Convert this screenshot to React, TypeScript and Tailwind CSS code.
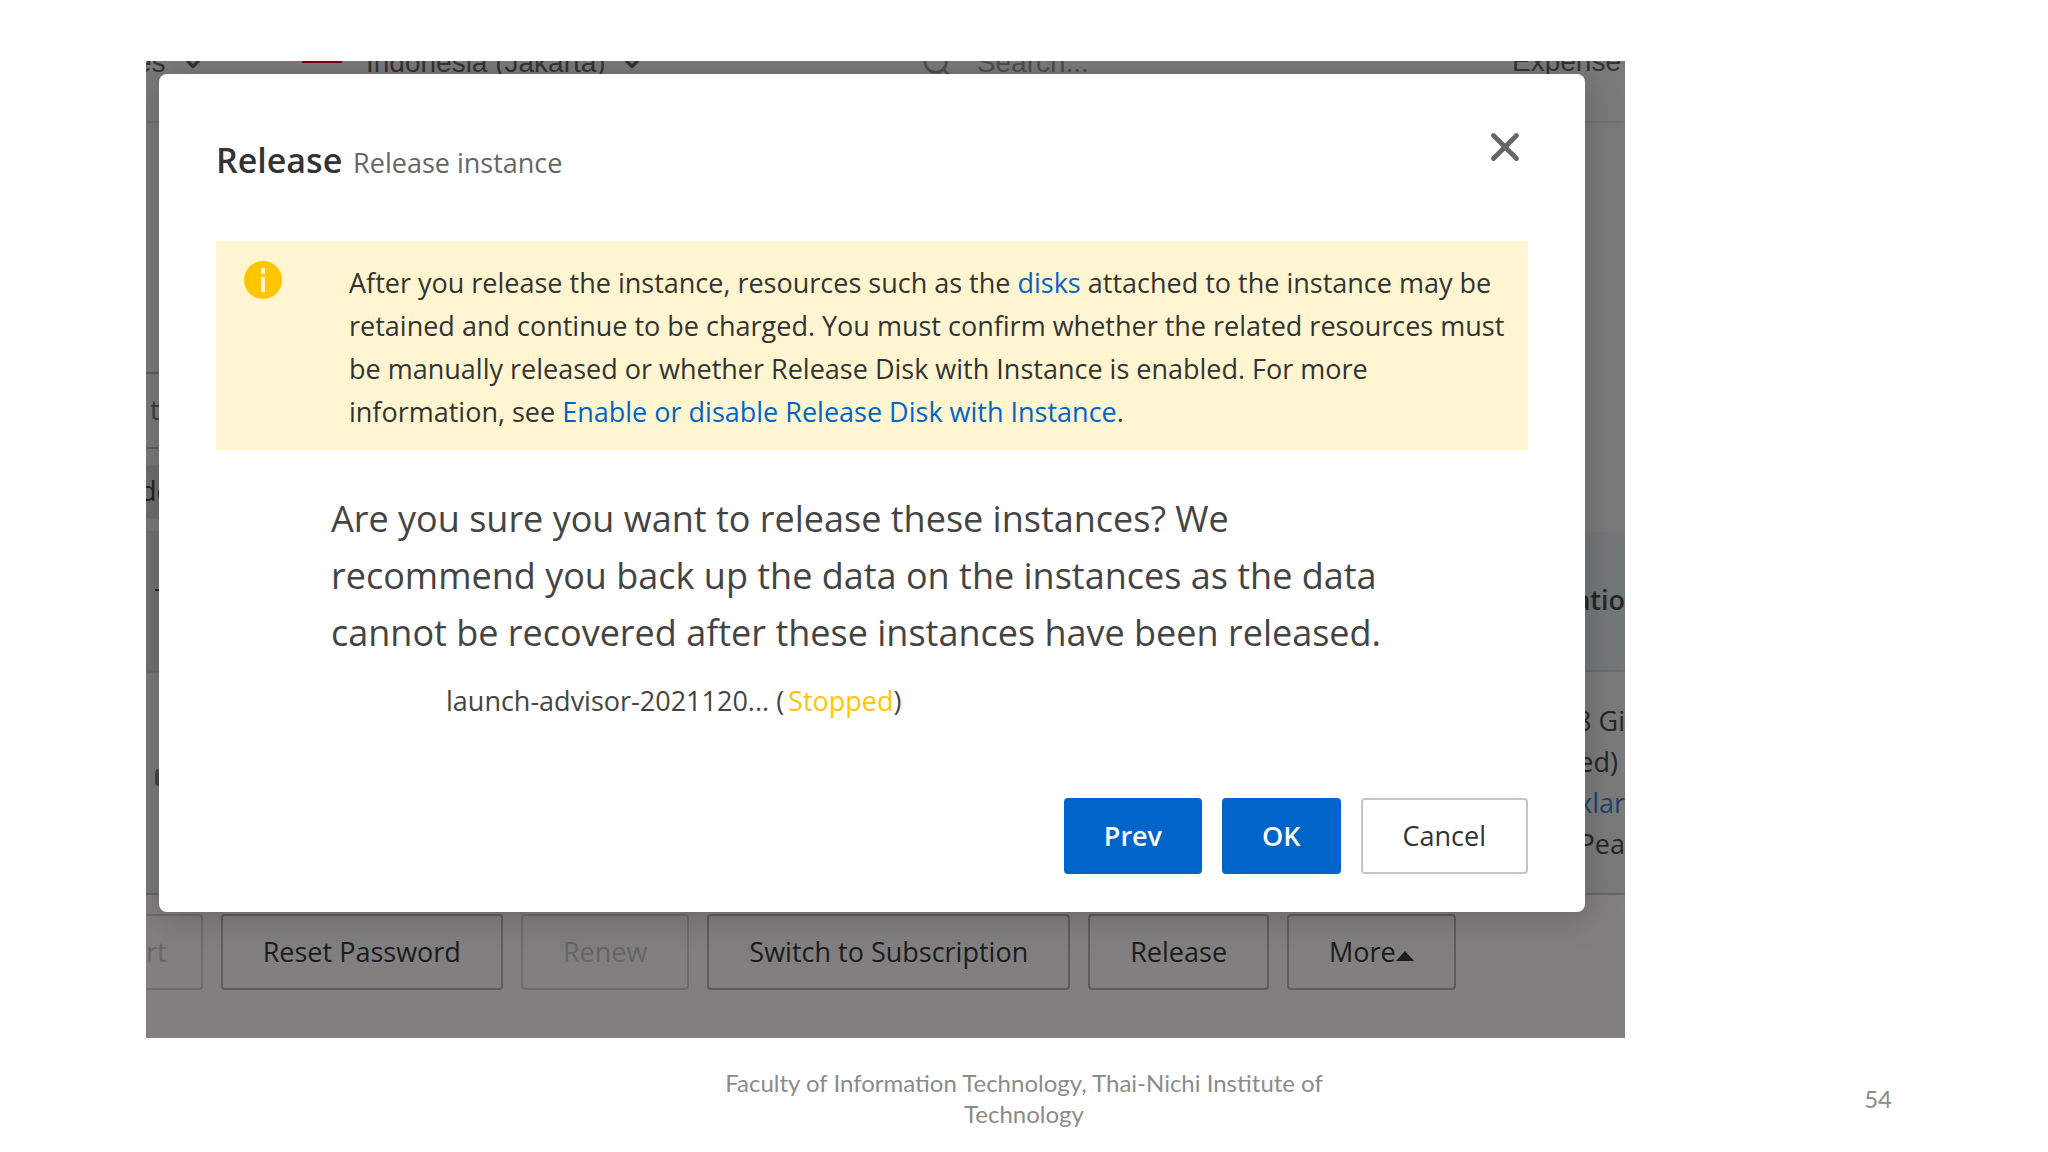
import { ChevronDown, Search, X } from "lucide-react";
import clsx from "clsx";

type ActionButtonProps = {
  label: string;
  disabled?: boolean;
  cut?: boolean;
  withCaret?: boolean;
};

const ActionButton = ({ label, disabled, cut, withCaret }: ActionButtonProps) => (
  <button
    type="button"
    disabled={disabled}
    className={clsx(
      "flex h-[76px] items-center whitespace-nowrap border-2 text-[27px] font-medium",
      cut ? "rounded-r border-l-0 pr-[34px]" : "rounded px-10",
      disabled ? "border-[#6e6c6d] text-[#676566]" : "border-[#5f5d5e] text-[#1c1c1c]",
    )}
  >
    {label}
    {withCaret && (
      <svg viewBox="0 0 18 10" className="mt-2 h-[10px] w-[18px]" fill="currentColor">
        <path d="M9 0 18 10H0Z" />
      </svg>
    )}
  </button>
);

const TopBar = () => (
  <header className="flex h-[62px] items-start justify-between border-b-2 border-[#6f6f6f] font-['Liberation_Sans',Arial,sans-serif] text-[28px] leading-8 text-[#333]">
    <div className="-mt-3.5 flex items-center">
      <span className="-ml-6 w-[61px]">ces</span>
      <ChevronDown className="mt-0.5 h-5 w-5" strokeWidth={4} />
      <div className="-mt-1.5 ml-[99px] h-7 w-10 overflow-hidden">
        <div className="h-[17px] bg-[#7a0014]" />
      </div>
      <span className="ml-6 whitespace-nowrap">Indonesia (Jakarta)</span>
      <ChevronDown className="ml-4 mt-0.5 h-5 w-5" strokeWidth={4} />
    </div>
    <div className="-mt-3.5 mr-36 flex items-center gap-6 text-[#4d4d4d]">
      <Search className="h-8 w-8" />
      <span>Search...</span>
    </div>
    <span className="-mt-[15px] mr-1">Expense</span>
  </header>
);

const ConsolePage = () => (
  <div className="col-start-1 row-start-1 flex flex-col bg-[#7b7a7b]">
    <TopBar />
    <div className="flex justify-between">
      <div className="w-[200px] text-[27px] text-[#222]">
        <div className="mt-[249px] h-[77px] border-y-2 border-[#5f5e5f] pl-1 pt-4 text-[#3c3c3c]">t</div>
        <div className="mt-4 h-[54px] bg-[#6f6e6e] pt-2 leading-9">
          <span className="-ml-1.5">de</span>
        </div>
        <div className="mt-3 h-[142px] border-b-2 border-[#6b6b6b] bg-[#727272] pt-[58px]">
          <div className="ml-[9px] h-0.5 w-4 bg-[#1c1c1c]" />
        </div>
        <div className="ml-[9px] mt-24 h-[17px] w-4 rounded bg-[#444]" />
      </div>
      <div className="w-[51px] whitespace-pre text-[27px] leading-[41px] text-[#262626]">
        <div className="mt-[409px] flex h-[140px] items-center justify-end border-b-2 border-[#6b6b6b] bg-[#747777] pb-1 font-semibold">
          atio
        </div>
        <div className="mt-7 flex flex-col items-end">
          <span>8 Gi</span>
          <span>ed) </span>
          <a href="#" className="text-[#1d4373]">xlar</a>
          <span>Pea</span>
        </div>
        <div className="mt-[29px]" />
      </div>
    </div>
    <div className="flex gap-[18px] border-t-2 border-[#676566] bg-[#817f80] pb-12 pt-[19px]">
      <ActionButton label="rt" disabled cut />
      <ActionButton label="Reset Password" />
      <ActionButton label="Renew" disabled />
      <ActionButton label="Switch to Subscription" />
      <ActionButton label="Release" />
      <ActionButton label="More" withCaret />
    </div>
  </div>
);

const InfoIcon = () => (
  <svg viewBox="0 0 38 38" className="mt-5 h-[38px] w-[38px] shrink-0">
    <circle cx="19" cy="19" r="19" fill="#ffc600" />
    <rect x="17" y="7" width="4" height="6" fill="#fff6d1" />
    <rect x="17" y="16" width="4" height="15" fill="#fff6d1" />
  </svg>
);

const ReleaseDialog = () => (
  <div
    role="dialog"
    aria-labelledby="release-title"
    className="z-10 col-start-1 row-start-1 mb-auto ml-[13px] mr-10 mt-[13px] rounded-lg bg-white px-[57px] pb-[38px] pt-[50px] text-[27px] shadow-[0_6px_36px_rgba(0,0,0,0.2)]"
  >
    <div className="flex items-start justify-between">
      <h1 id="release-title" className="mt-3 text-[34px] font-semibold leading-[48px] text-[#333]">
        Release <span className="ml-0.5 text-[27px] font-normal text-[#666]">Release instance</span>
      </h1>
      <button type="button" aria-label="Close" className="text-[#666]">
        <X className="h-[46px] w-[46px]" strokeWidth={2.5} />
      </button>
    </div>

    <div className="mt-[54px] flex bg-[#fff6d1] pl-7 pr-5">
      <InfoIcon />
      <p className="ml-[67px] pb-[17px] pt-5 leading-[43px] text-[#333]">
        After you release the instance, resources such as the{" "}
        <a href="#" className="text-[#0064c8]">disks</a> attached to the instance may be retained and continue to be
        charged. You must confirm whether the related resources must be manually released or whether Release Disk
        with Instance is enabled. For more information, see{" "}
        <a href="#" className="text-[#0064c8]">Enable or disable Release Disk with Instance</a>.
      </p>
    </div>

    <p className="ml-[115px] mt-10 max-w-[1068px] text-[36px] leading-[57px] text-[#444]">
      Are you sure you want to release these instances? We recommend you back up the data on the instances as the
      data cannot be recovered after these instances have been released.
    </p>
    <div className="ml-[230px] mt-[18px] leading-[43px] text-[#444]">
      launch-advisor-2021120... (<span className="ml-1 font-medium text-[#ffc600]">Stopped</span>)
    </div>

    <div className="mt-[76px] flex justify-end gap-5">
      <button type="button" className="h-[76px] rounded bg-[#0064c8] px-10 font-semibold text-white">
        Prev
      </button>
      <button type="button" className="h-[76px] rounded bg-[#0064c8] px-10 font-semibold text-white">
        OK
      </button>
      <button type="button" className="h-[76px] rounded border-2 border-[#c4c6cf] px-10 text-[#333]">
        Cancel
      </button>
    </div>
  </div>
);

export default function App() {
  return (
    <main className="bg-white font-['Open_Sans',sans-serif]">
      <section className="ml-[146px] mr-[423px] mt-[61px] grid overflow-hidden">
        <ConsolePage />
        <ReleaseDialog />
      </section>
      <footer className="mt-[29px] grid grid-cols-[1fr_620px_1fr] items-center font-[Lato,sans-serif] text-[24px] leading-[31px] text-[#8b8b8b]">
        <p className="col-start-2 text-center">
          Faculty of Information Technology, Thai-Nichi Institute of Technology
        </p>
        <span className="mr-[156px] text-right">54</span>
      </footer>
    </main>
  );
}
